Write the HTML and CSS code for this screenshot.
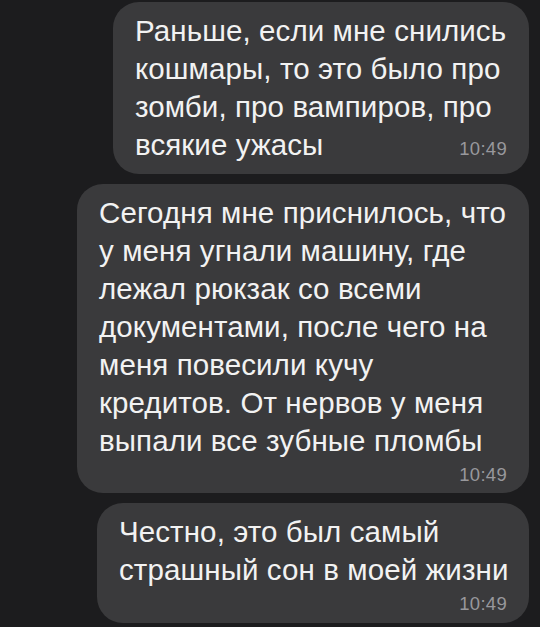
FILE: index.html
```html
<!DOCTYPE html>
<html lang="ru">
<head>
  <meta charset="UTF-8" />
  <meta name="viewport" content="width=device-width, initial-scale=1.0" />
  <title>Сообщения</title>
  <link rel="stylesheet" href="styles.css">
</head>
<body>
  <div class="chat">
    <div class="bubble bubble-first">
      <p class="text">Раньше, если мне снились<br>кошмары, то это было про<br>зомби, про вампиров, про<br>всякие ужасы<span class="time time-inline">10:49</span></p>
    </div>

    <div class="bubble bubble-second">
      <p class="text">Сегодня мне приснилось, что<br>у меня угнали машину, где<br>лежал рюкзак со всеми<br>документами, после чего на<br>меня повесили кучу<br>кредитов. От нервов у меня<br>выпали все зубные пломбы</p>
      <div class="time">10:49</div>
    </div>

    <div class="bubble bubble-third">
      <p class="text">Честно, это был самый<br>страшный сон в моей жизни</p>
      <div class="time">10:49</div>
    </div>
  </div>
</body>
</html>
```

FILE: styles.css
```css
* {
  box-sizing: border-box;
  margin: 0;
  padding: 0;
}

body {
  font-family: "Liberation Sans", Arial, sans-serif;
  background-color: #1c1c1e;
  color: #f2f2f2;
  width: 540px;
  height: 627px;
  overflow: hidden;
}

.chat {
  display: flex;
  flex-direction: column;
  align-items: flex-end;
  gap: 10px;
  padding: 2px 11px 0 0;
}

.bubble {
  background-color: #3a3a3c;
  border-radius: 26px;
  padding: 10px 22px 9px 22px;
}

.bubble-first {
  width: 416px;
  padding-bottom: 10px;
}

.bubble-second {
  width: 452px;
  padding-bottom: 8px;
}

.bubble-third {
  width: 432px;
}

.text {
  font-size: 29.5px;
  line-height: 38px;
  letter-spacing: 0.1px;
  white-space: nowrap;
}

.time {
  margin-top: 5px;
  font-size: 18.5px;
  line-height: 20px;
  color: #98989c;
  text-align: right;
  letter-spacing: 0.3px;
}

.time-inline {
  float: right;
  margin-top: 14px;
  margin-left: 14px;
  line-height: 18px;
}
```
